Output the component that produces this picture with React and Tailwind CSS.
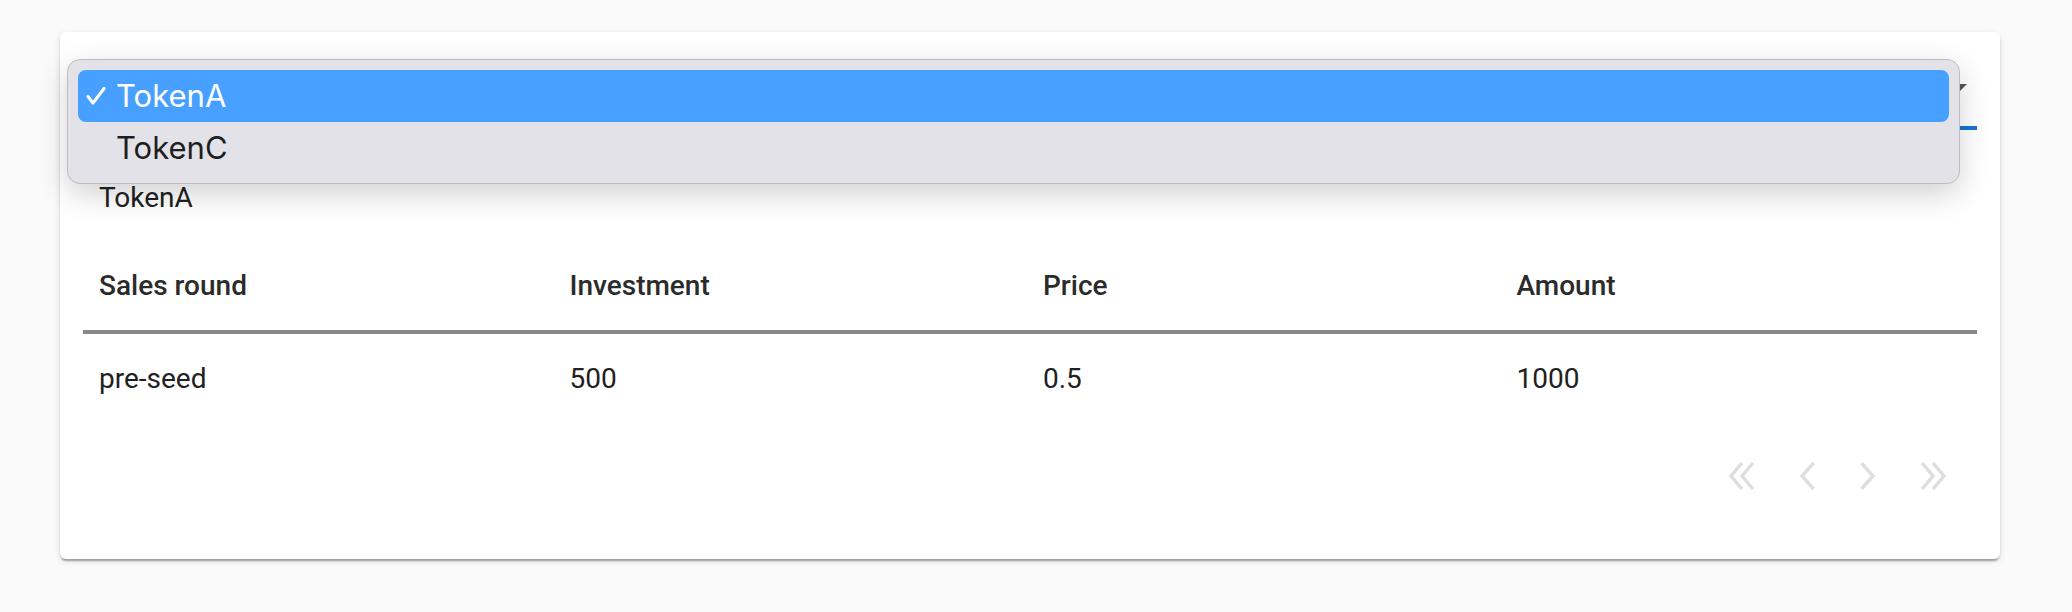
import React from 'react';

const rows = [
  { round: 'pre-seed', investment: '500', price: '0.5', amount: '1000' },
];

const Chevron = ({ double, flip }) => (
  <svg
    width={double ? 28 : 17}
    height="28"
    viewBox={double ? '0 0 28 28' : '0 0 17 28'}
    fill="none"
    stroke="#dedede"
    strokeWidth="3.4"
    strokeLinecap="butt"
    strokeLinejoin="miter"
    className={flip ? 'scale-x-[-1]' : ''}
  >
    {double ? (
      <path d="M14 1 L3 14 L14 27 M25 1 L14 14 L25 27" />
    ) : (
      <path d="M14.5 1 L3 14 L14.5 27" />
    )}
  </svg>
);

const Check = () => (
  <svg width="20" height="18" viewBox="0 0 20 18" fill="none" stroke="#fff" strokeWidth="3" strokeLinecap="round" strokeLinejoin="round">
    <path d="M2 9.5 L7 16 L18 1.5" />
  </svg>
);

const App = () => {
  return (
    <div className="min-h-screen bg-[#fafafa] pt-[32px] pl-[60px]" style={{ fontFamily: 'Roboto, "Liberation Sans", sans-serif' }}>
      <div className="relative w-[1940px] h-[527px] bg-white rounded-[6px] px-[23px] pt-[26px] shadow-[0_4px_2px_-2px_rgba(0,0,0,0.2),0_2px_2px_0_rgba(0,0,0,0.14),0_2px_6px_0_rgba(0,0,0,0.12)]">
        {/* select (covered by the open native list) */}
        <div className="relative h-[72px] border-b-4 border-[#1976d2] flex items-center text-[32px] text-[#212121]">
          <span className="pl-[2px]">TokenA</span>
          <svg className="absolute right-[10px] top-[26px]" width="22" height="12" viewBox="0 0 22 12">
            <path d="M0 0 L11 11 L22 0 Z" fill="#555" />
          </svg>
        </div>

        <div className="mt-[48px] h-[40px] flex items-center pl-[16px] text-[28px] text-[#212121]">
          TokenA
        </div>

        <div className="mt-[24px]">
          <div className="grid grid-cols-4 h-[92px] border-b-4 border-[#888888] items-center text-[28px] font-medium text-[#2b2b2b]">
            <div className="pl-[16px]">Sales round</div>
            <div className="pl-[13px]">Investment</div>
            <div className="pl-[13px]">Price</div>
            <div className="pl-[13px]">Amount</div>
          </div>
          {rows.map((r) => (
            <div key={r.round} className="grid grid-cols-4 h-[90px] items-center text-[28px] text-[#212121]">
              <div className="pl-[16px]">{r.round}</div>
              <div className="pl-[13px]">{r.investment}</div>
              <div className="pl-[13px]">{r.price}</div>
              <div className="pl-[13px]">{r.amount}</div>
            </div>
          ))}
        </div>

        <div className="h-[104px] flex items-center justify-end gap-[43px] pr-[30px]">
          <Chevron double />
          <Chevron />
          <Chevron flip />
          <Chevron double flip />
        </div>

        {/* open dropdown list */}
        <div
          className="absolute left-[7px] top-[27px] w-[1893px] h-[125px] rounded-[13px] border border-[#bcbcc0] bg-[#e3e2e8] p-[10px] shadow-[0_10px_30px_rgba(0,0,0,0.18)] text-[31px]"
          style={{ fontFamily: 'Inter, "Liberation Sans", sans-serif' }}
        >
          <div className="h-[52px] rounded-[8px] bg-[#47a0ff] text-white flex items-center">
            <span className="w-[38px] pl-[8px] flex items-center"><Check /></span>
            <span>TokenA</span>
          </div>
          <div className="h-[52px] flex items-center text-[#1e1e1e]">
            <span className="w-[38px]"></span>
            <span>TokenC</span>
          </div>
        </div>
      </div>
    </div>
  );
};

export default App;
